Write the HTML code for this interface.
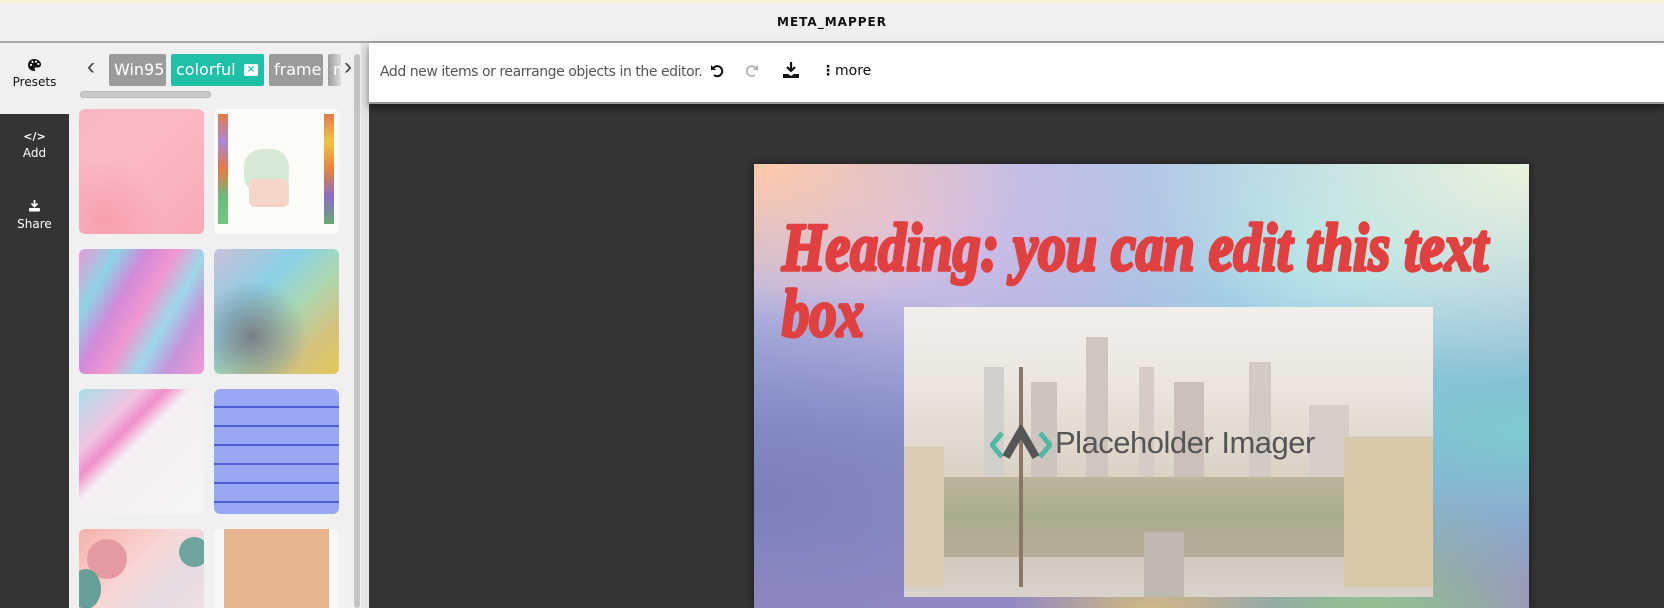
<!DOCTYPE html>
<html><head><meta charset="utf-8"><style>
*{margin:0;padding:0;box-sizing:border-box}
html,body{width:1664px;height:608px;overflow:hidden}
body{background:#353535;font-family:"Liberation Sans",sans-serif;position:relative}
.abs{position:absolute}
.top{left:0;top:0;width:1664px;height:43px;background:#f0f0f0;border-bottom:2px solid #a8a8a8}
.yl{left:0;top:0;width:1664px;height:3px;background:#fbefd2}
.title{left:0;width:1664px;top:15px;text-align:center;font-size:12px;font-weight:bold;letter-spacing:1px;color:#111;font-family:"DejaVu Sans",sans-serif}
.rail{left:0;top:43px;width:69px;height:565px;background:#343434}
.ri{position:absolute;left:0;width:69px;text-align:center;font-size:12px;color:#fff;font-family:"DejaVu Sans",sans-serif}
.panel{left:69px;top:43px;width:300px;height:565px;background:#f0f0f0;overflow:hidden}
.tag{position:absolute;top:11px;height:32px;background:#9b9b9b;color:#fff;font-size:16px;line-height:32px;padding-left:5px;border-radius:2px;font-family:"DejaVu Sans",sans-serif;overflow:hidden}
.tile{position:absolute;width:125px;height:125px;border-radius:6px;overflow:hidden}
.tb{left:369px;top:43px;width:1295px;height:61px;background:#fff;border-bottom:2px solid #999;box-shadow:0 4px 8px rgba(0,0,0,.5)}
</style></head><body>
<div class="abs top"></div><div class="abs yl"></div>
<div class="abs title">META_MAPPER</div>

<div class="abs rail">
 <div style="position:absolute;left:0;top:0;width:69px;height:71px;background:#f0f0f0"></div>
 <div class="ri" style="top:16px;color:#111"><svg width="13" height="12" viewBox="0 0 13 12"><path d="M6.5 0C2.5 0 0 2.5 0 6c0 3.5 3 6 6 6 1.3 0 1.5-1 .8-1.8-.6-.7-.3-1.7.8-1.7H10c1.8 0 3-1.2 3-3C13 2.5 10 0 6.5 0z" fill="#111"/><circle cx="3" cy="6" r="1.1" fill="#f0f0f0"/><circle cx="4.5" cy="3" r="1.1" fill="#f0f0f0"/><circle cx="8" cy="2.6" r="1.1" fill="#f0f0f0"/><circle cx="10.4" cy="5" r="1.1" fill="#f0f0f0"/></svg><div style="margin-top:1px">Presets</div></div>
 <div class="ri" style="top:87px"><div style="font-size:11px;font-weight:bold">&lt;/&gt;</div><div style="margin-top:3px">Add</div></div>
 <div class="ri" style="top:157px"><svg width="13" height="12" viewBox="0 0 13 12"><path d="M6.5 0v6M3.5 3.5l3 3 3-3" stroke="#fff" stroke-width="1.8" fill="none"/><rect x="1" y="8" width="11" height="3.5" rx="1" fill="#fff"/></svg><div style="margin-top:2px">Share</div></div>
</div>

<div class="abs panel">
 <div style="position:absolute;left:18px;top:10px;font-size:24px;color:#444">‹</div>
 <div class="tag" style="left:40px;width:57px">Win95</div>
 <div class="tag" style="left:102px;width:93px;background:#1fbfa8">colorful<span style="position:absolute;left:73px;top:10px;width:14px;height:12px;background:#fff;border-radius:2px;color:#1fbfa8;font-size:10px;line-height:12px;text-align:center;font-weight:bold">×</span></div>
 <div class="tag" style="left:200px;width:54px">frame</div>
 <div class="tag" style="left:259px;width:13px;background:linear-gradient(90deg,#9b9b9b,#ddd)">n</div>
 <div style="position:absolute;left:275px;top:10px;font-size:24px;color:#444">›</div>
 <div style="position:absolute;left:11px;top:48px;width:131px;height:7px;background:#c8c8c8;border-radius:3px;border:1px solid #bbb"></div>
 <div style="position:absolute;left:285px;top:11px;width:6px;height:554px;background:#c4c4c4;border-radius:3px"></div>
 <div style="position:absolute;left:292px;top:0;width:8px;height:565px;background:#e4e4e4"></div>
 <div class="tile" style="left:10px;top:66px;background:radial-gradient(circle at 20% 90%,#f7a0ad,transparent 40%),linear-gradient(135deg,#f9b8c0,#fbb8c2 50%,#f8a9b5)"></div>
 <div class="tile" style="left:145px;top:66px;background:#fbfbf8"><div style="position:absolute;left:30px;top:40px;width:45px;height:45px;border-radius:40%;background:#d7ead8"></div><div style="position:absolute;left:35px;top:70px;width:40px;height:28px;background:#f5d5c5;border-radius:6px"></div><div style="position:absolute;left:4px;top:5px;width:10px;height:110px;background:linear-gradient(#e47a4a,#a88ad6,#e77a45,#6bbb7d,#76c37e)"></div><div style="position:absolute;left:110px;top:5px;width:10px;height:110px;background:linear-gradient(#e47a4a,#f1c344,#e8823b,#8e6cc9,#62ad72)"></div></div>
 <div class="tile" style="left:10px;top:206px;background:linear-gradient(120deg,#e59ad4,#8fd3e6 20%,#d189d8 35%,#f197d0 50%,#9ed8ea 65%,#c594db 80%,#f49ad1)"></div>
 <div class="tile" style="left:145px;top:206px;background:radial-gradient(circle at 30% 70%,#7a7f88,transparent 45%),linear-gradient(135deg,#c8c0d8,#8bd0e6 35%,#a8d9b6 55%,#d6c27a 80%,#e2c95a)"></div>
 <div class="tile" style="left:10px;top:346px;background:linear-gradient(135deg,#a7dee8 0%,#f1c6e1 25%,#ef8fc9 35%,#f5eef3 45%,#f6f6f6)"></div>
 <div class="tile" style="left:145px;top:346px;background:repeating-linear-gradient(180deg,#9aa8f3 0 17px,#4d5fd6 17px 19px)"></div>
 <div class="tile" style="left:10px;top:486px;background:linear-gradient(135deg,#f6b2aa,#f9d7d6 40%,#e4dce3 60%,#fbe1e1)"><div style="position:absolute;left:8px;top:10px;width:40px;height:40px;border-radius:50%;background:#e39aa0"></div><div style="position:absolute;left:-8px;top:40px;width:30px;height:40px;border-radius:50%;background:#679f98"></div><div style="position:absolute;left:100px;top:8px;width:30px;height:30px;border-radius:50%;background:#6ea49d"></div></div>
 <div class="tile" style="left:145px;top:486px;background:linear-gradient(90deg,#f8f8f8 0 10px,#e6b48e 10px 115px,#f8f8f8 115px)"></div>
</div>

<div class="abs tb">
 <div style="position:absolute;left:11px;top:21px;font-size:14px;color:#555;font-family:'DejaVu Sans',sans-serif;letter-spacing:-.45px">Add new items or rearrange objects in the editor.</div>
 <svg style="position:absolute;left:341px;top:21px" width="14" height="14" viewBox="0 0 14 14"><path d="M3 4.5A5 5 0 1 1 4 11" stroke="#111" stroke-width="2" fill="none"/><path d="M1 1v5h5z" fill="#111"/></svg>
 <svg style="position:absolute;left:376px;top:21px" width="14" height="14" viewBox="0 0 14 14"><path d="M11 4.5A5 5 0 1 0 10 11" stroke="#aaa" stroke-width="1.5" fill="none"/><path d="M13 1v5H8z" fill="#aaa"/></svg>
 <svg style="position:absolute;left:413px;top:18px" width="18" height="18" viewBox="0 0 18 18"><path d="M9 1v9M5 6l4 4 4-4" stroke="#111" stroke-width="2.2" fill="none"/><path d="M1 13h5l3 2 3-2h5v4H1z" fill="#111"/></svg>
 <div style="position:absolute;left:452px;top:20px;font-size:14px;color:#111;font-family:'DejaVu Sans',sans-serif"><b>⋮</b>more</div>
</div>

<div class="abs" style="left:754px;top:164px;width:775px;height:444px;overflow:hidden;box-shadow:0 0 10px rgba(0,0,0,.5);
background:
radial-gradient(ellipse at 0% 0%,#ffc9a8 0%,transparent 25%),
radial-gradient(ellipse at 100% 0%,#ebf4dc 0%,transparent 35%),
radial-gradient(ellipse at 0% 75%,#7d7fb8 0%,transparent 45%),
radial-gradient(ellipse at 50% 110%,#e2c96a 0%,transparent 25%),
radial-gradient(ellipse at 80% 110%,#8fd07d 0%,transparent 25%),
radial-gradient(ellipse at 100% 60%,#7ecbd0 0%,transparent 40%),
radial-gradient(ellipse at 20% 15%,#d6bfe7 0%,transparent 40%),
radial-gradient(ellipse at 75% 20%,#a6e3ea 0%,transparent 40%),
linear-gradient(180deg,#a8bde6,#8ca0d8 60%,#9b8cc8)">
 <div style="position:absolute;left:150px;top:143px;width:529px;height:290px;overflow:hidden;background:linear-gradient(180deg,#f2eeec 0%,#ece6e0 25%,#ddd4c8 55%,#cfc6b8 80%,#d8d2cb 100%)">
  <div style="position:absolute;left:80px;top:60px;width:20px;height:110px;background:#d3cfcc"></div>
  <div style="position:absolute;left:127px;top:75px;width:26px;height:100px;background:#cdc4bf"></div>
  <div style="position:absolute;left:182px;top:30px;width:22px;height:140px;background:#cfc6c0"></div>
  <div style="position:absolute;left:235px;top:60px;width:15px;height:110px;background:#d6ccc5"></div>
  <div style="position:absolute;left:270px;top:75px;width:30px;height:100px;background:#ccc1ba"></div>
  <div style="position:absolute;left:345px;top:55px;width:22px;height:120px;background:#d2cbc5"></div>
  <div style="position:absolute;left:405px;top:98px;width:40px;height:80px;background:#d6cec8"></div>
  <div style="position:absolute;left:0;top:170px;width:529px;height:80px;background:linear-gradient(180deg,#bdb59d,#a9ad8e 50%,#b9ad9a)"></div>
  <div style="position:absolute;left:440px;top:130px;width:89px;height:150px;background:#d9c9a8"></div>
  <div style="position:absolute;left:0;top:140px;width:40px;height:140px;background:#d9ccb5"></div>
  <div style="position:absolute;left:115px;top:60px;width:4px;height:220px;background:#8a7866"></div>
  <div style="position:absolute;left:240px;top:225px;width:40px;height:65px;background:#bfb8b0"></div>
  <svg style="position:absolute;left:86px;top:118px" width="62" height="40" viewBox="0 0 62 40"><path d="M12 8L2 20l10 12M50 8l10 12-10 12" stroke="#4fb9a5" stroke-width="5" fill="none"/><path d="M16 32L31 6l15 26" stroke="#555" stroke-width="8" fill="none"/></svg>
  <div style="position:absolute;left:151px;top:118px;font-size:31px;color:#555;letter-spacing:-.5px">Placeholder Imager</div>
 </div>
 <svg style="position:absolute;left:0;top:0" width="775" height="200"><g fill="#e0403f" stroke="#e0403f" stroke-width="3.5" stroke-linejoin="round" font-family="Liberation Serif,serif" font-weight="bold" font-style="italic" font-size="68"><text x="28" y="106" textLength="706" lengthAdjust="spacingAndGlyphs">Heading: you can edit this text</text><text x="28" y="172" textLength="82" lengthAdjust="spacingAndGlyphs">box</text></g></svg>
</div>
</body></html>
